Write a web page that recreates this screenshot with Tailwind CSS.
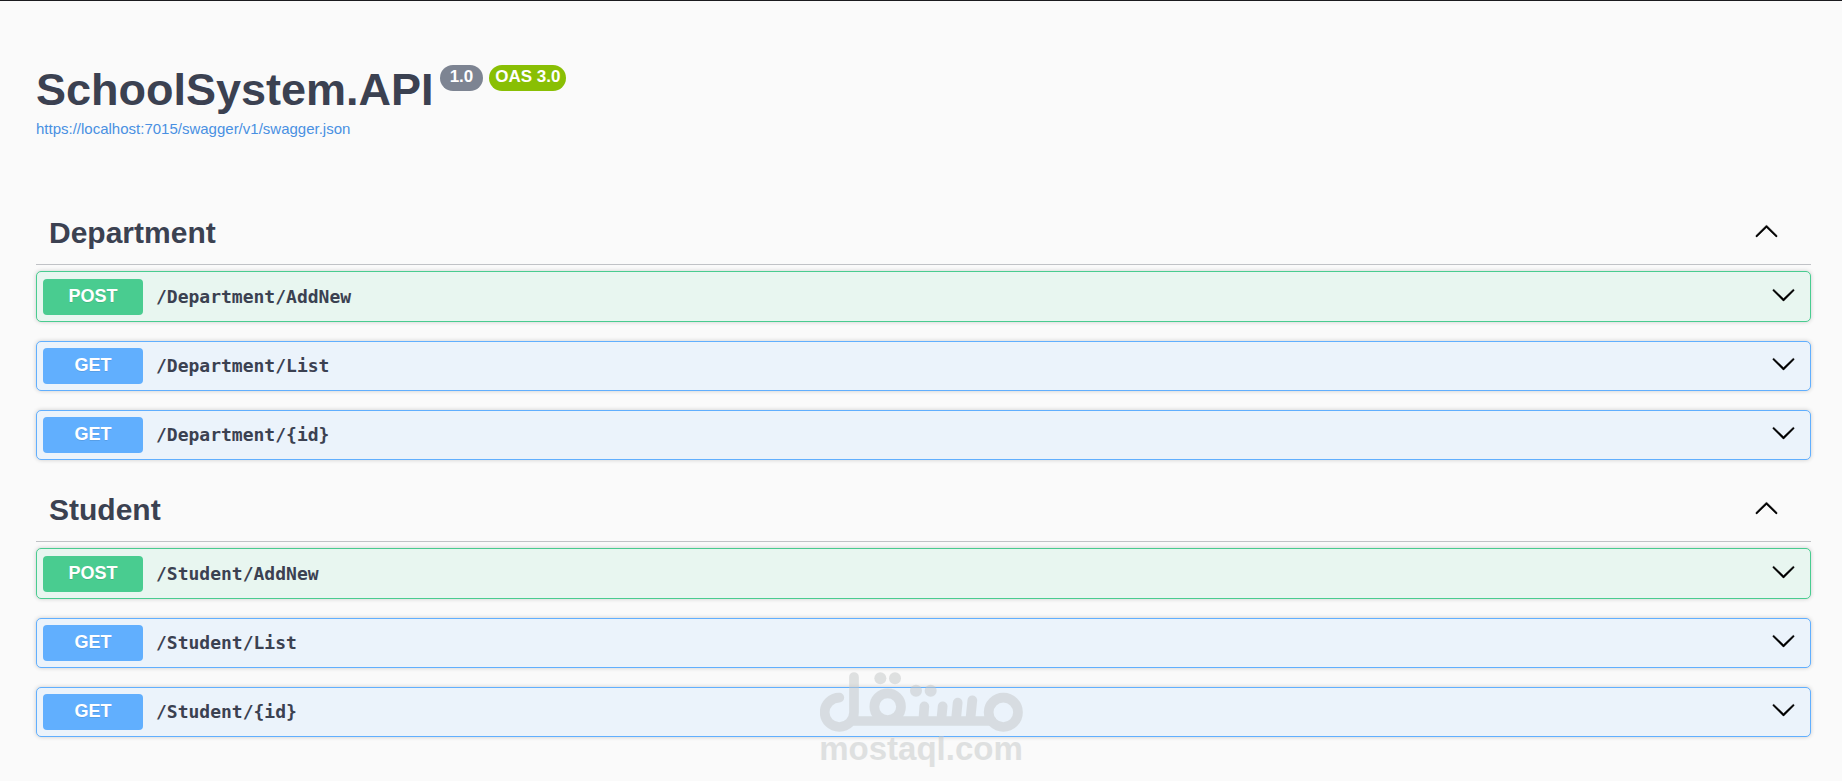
<!DOCTYPE html>
<html lang="en">
    <head>
        <meta charset="UTF-8" />
        <meta name="viewport" content="width=device-width, initial-scale=1.0" />
        <script src="https://cdn.jsdelivr.net/npm/@tailwindcss/browser@4"></script>

        <title>Swagger UI</title>
    </head>
    <body class="bg-[#fafafa] font-['Liberation_Sans',Arial,sans-serif] text-[#3b4151]">
        <svg class="hidden">
            <symbol id="arrow-up" viewBox="0 0 20 20">
                <path d="M17.418 14.908c.272.268.709.268.979 0s.271-.701 0-.969l-7.908-7.83c-.27-.268-.707-.268-.979 0l-7.908 7.83c-.27.268-.27.701 0 .969.271.268.709.268.979 0L10 7.767l7.418 7.141z" />
            </symbol>
            <symbol id="arrow-down" viewBox="0 0 20 20">
                <path d="M17.418 6.109c.272-.268.709-.268.979 0s.271.701 0 .969l-7.908 7.83c-.27.268-.707.268-.979 0l-7.908-7.83c-.27-.268-.27-.701 0-.969.271-.268.709-.268.979 0L10 13.25l7.418-7.141z" />
            </symbol>
        </svg>

        <div class="relative border-t border-[#1b1b1f] pt-16 pr-[31px] pb-11 pl-9">
            <header>
                <div class="flex items-start gap-1.5">
                    <h1 class="text-[45px] leading-[50px] font-bold">SchoolSystem.API</h1>
                    <span class="h-[26px] rounded-full bg-[#7d8492] px-2.5 text-[17px] leading-6 font-bold text-white">1.0</span>
                    <span class="h-[26px] rounded-full bg-[#89bf04] px-1.5 text-[17px] leading-6 font-bold text-white">OAS 3.0</span>
                </div>
                <a href="#" class="mt-1 block w-fit text-[15px] leading-5 text-[#4990e2]">https://localhost:7015/swagger/v1/swagger.json</a>
            </header>

            <main class="mt-[63px]">
                <section>
                    <h2 class="mb-1.5 border-b border-[#3b4151]/30">
                        <button class="flex h-[62px] w-full items-center justify-between pr-8 pl-[13px] text-3xl leading-9 font-bold">
                            Department
                            <svg class="mt-4 size-[25px] self-start fill-black stroke-black stroke-[0.3]"><use href="#arrow-up" /></svg>
                        </button>
                    </h2>

                    <button class="mb-[19px] flex w-full items-start rounded-[5px] border border-[#49cc90] bg-[#e8f6f0] px-1.5 pt-[7px] pb-1.5 shadow-[0_0_4px_rgba(0,0,0,0.19)]">
                        <span class="h-9 w-[100px] rounded-[4px] bg-[#49cc90] text-lg leading-[34px] font-bold text-white text-shadow-[0_1px_0_rgba(0,0,0,0.1)]">POST</span>
                        <span class="ml-[13px] flex-1 text-left font-['DejaVu_Sans_Mono',monospace] text-lg leading-9 font-bold">/Department/AddNew</span>
                        <svg class="mt-[3px] mr-2 size-[25px] fill-black stroke-black stroke-[0.3]"><use href="#arrow-down" /></svg>
                    </button>
                    <button class="mb-[19px] flex w-full items-start rounded-[5px] border border-[#61affe] bg-[#ebf3fb] p-1.5 shadow-[0_0_4px_rgba(0,0,0,0.19)]">
                        <span class="h-9 w-[100px] rounded-[4px] bg-[#61affe] text-lg leading-[34px] font-bold text-white text-shadow-[0_1px_0_rgba(0,0,0,0.1)]">GET</span>
                        <span class="ml-[13px] flex-1 text-left font-['DejaVu_Sans_Mono',monospace] text-lg leading-9 font-bold">/Department/List</span>
                        <svg class="mt-[3px] mr-2 size-[25px] fill-black stroke-black stroke-[0.3]"><use href="#arrow-down" /></svg>
                    </button>
                    <button class="mb-[19px] flex w-full items-start rounded-[5px] border border-[#61affe] bg-[#ebf3fb] p-1.5 shadow-[0_0_4px_rgba(0,0,0,0.19)]">
                        <span class="h-9 w-[100px] rounded-[4px] bg-[#61affe] text-lg leading-[34px] font-bold text-white text-shadow-[0_1px_0_rgba(0,0,0,0.1)]">GET</span>
                        <span class="ml-[13px] flex-1 text-left font-['DejaVu_Sans_Mono',monospace] text-lg leading-9 font-bold">/Department/{id}</span>
                        <svg class="mt-[3px] mr-2 size-[25px] fill-black stroke-black stroke-[0.3]"><use href="#arrow-down" /></svg>
                    </button>
                </section>

                <section>
                    <h2 class="mb-1.5 border-b border-[#3b4151]/30">
                        <button class="flex h-[62px] w-full items-center justify-between pr-8 pl-[13px] text-3xl leading-9 font-bold">
                            Student
                            <svg class="mt-4 size-[25px] self-start fill-black stroke-black stroke-[0.3]"><use href="#arrow-up" /></svg>
                        </button>
                    </h2>

                    <button class="mb-[19px] flex w-full items-start rounded-[5px] border border-[#49cc90] bg-[#e8f6f0] px-1.5 pt-[7px] pb-1.5 shadow-[0_0_4px_rgba(0,0,0,0.19)]">
                        <span class="h-9 w-[100px] rounded-[4px] bg-[#49cc90] text-lg leading-[34px] font-bold text-white text-shadow-[0_1px_0_rgba(0,0,0,0.1)]">POST</span>
                        <span class="ml-[13px] flex-1 text-left font-['DejaVu_Sans_Mono',monospace] text-lg leading-9 font-bold">/Student/AddNew</span>
                        <svg class="mt-[3px] mr-2 size-[25px] fill-black stroke-black stroke-[0.3]"><use href="#arrow-down" /></svg>
                    </button>
                    <button class="mb-[19px] flex w-full items-start rounded-[5px] border border-[#61affe] bg-[#ebf3fb] p-1.5 shadow-[0_0_4px_rgba(0,0,0,0.19)]">
                        <span class="h-9 w-[100px] rounded-[4px] bg-[#61affe] text-lg leading-[34px] font-bold text-white text-shadow-[0_1px_0_rgba(0,0,0,0.1)]">GET</span>
                        <span class="ml-[13px] flex-1 text-left font-['DejaVu_Sans_Mono',monospace] text-lg leading-9 font-bold">/Student/List</span>
                        <svg class="mt-[3px] mr-2 size-[25px] fill-black stroke-black stroke-[0.3]"><use href="#arrow-down" /></svg>
                    </button>
                    <button class="flex w-full items-start rounded-[5px] border border-[#61affe] bg-[#ebf3fb] p-1.5 shadow-[0_0_4px_rgba(0,0,0,0.19)]">
                        <span class="h-9 w-[100px] rounded-[4px] bg-[#61affe] text-lg leading-[34px] font-bold text-white text-shadow-[0_1px_0_rgba(0,0,0,0.1)]">GET</span>
                        <span class="ml-[13px] flex-1 text-left font-['DejaVu_Sans_Mono',monospace] text-lg leading-9 font-bold">/Student/{id}</span>
                        <svg class="mt-[3px] mr-2 size-[25px] fill-black stroke-black stroke-[0.3]"><use href="#arrow-down" /></svg>
                    </button>
                </section>
            </main>

            <!-- watermark -->
            <div class="pointer-events-none absolute inset-x-0 bottom-[15px] flex flex-col items-center text-[#c4c7c8] opacity-50">
                <svg class="h-[60px] w-[203px]" viewBox="57 63 609 180" fill="none" stroke="currentColor" stroke-width="29" stroke-linecap="round" stroke-linejoin="round">
                    <path d="M115 140a44 44 0 1 0 44 44V78M152 210H572M367 206l3-40M421 206l4-40M465 206l5-51M508 206l6-58" />
                    <circle cx="260" cy="167" r="40" />
                    <circle cx="607" cy="184" r="44" />
                    <g fill="currentColor" stroke="none">
                        <circle cx="238" cy="82" r="18" />
                        <circle cx="282" cy="82" r="18" />
                        <circle cx="345" cy="119" r="18" />
                        <circle cx="389" cy="119" r="18" />
                    </g>
                </svg>
                <p class="text-[33px] leading-[34px] font-bold">mostaql.com</p>
            </div>
        </div>
    </body>
</html>
